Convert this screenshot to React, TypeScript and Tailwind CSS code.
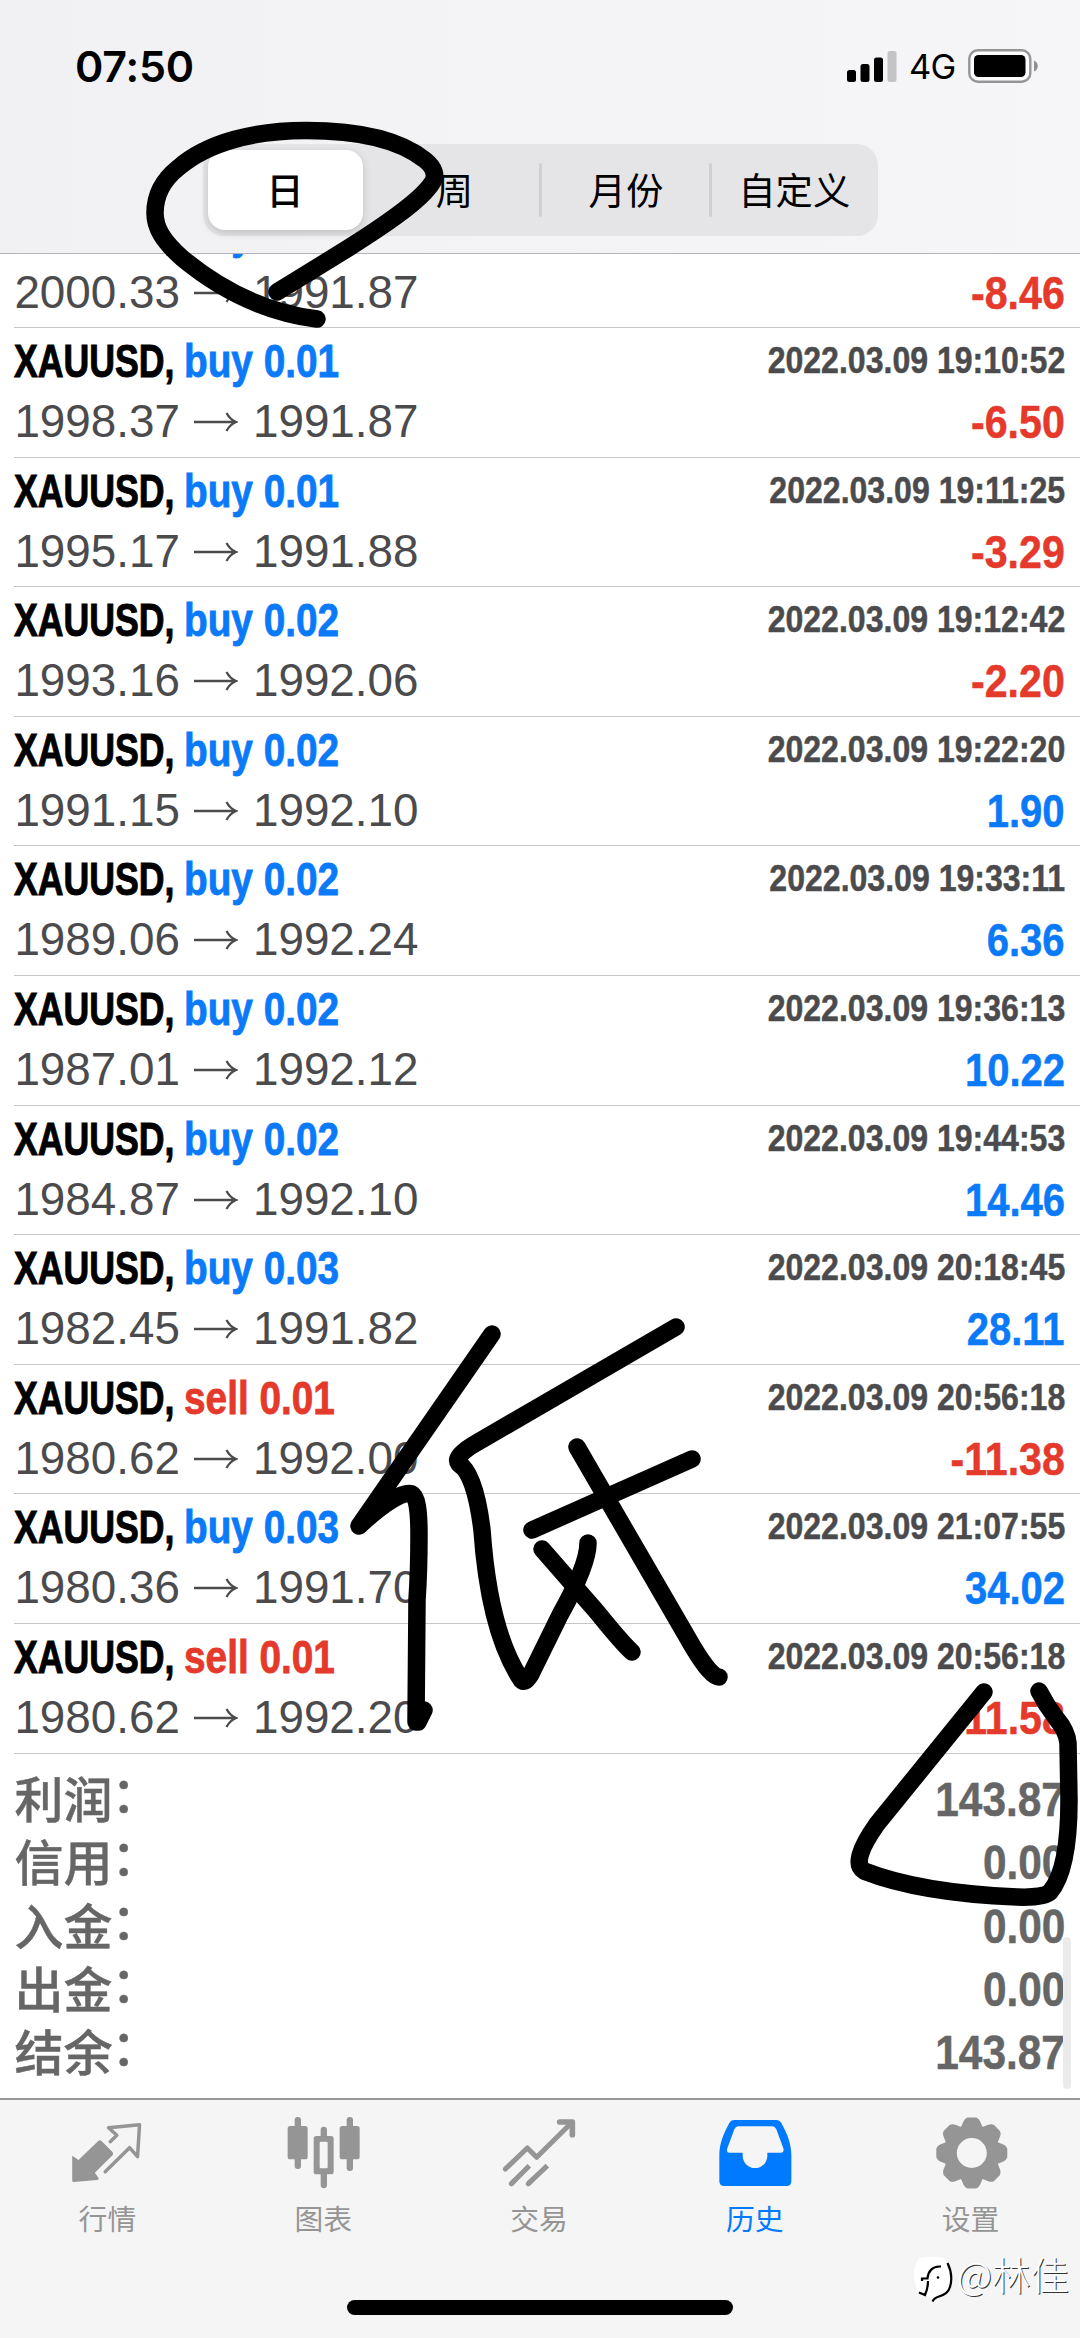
import type { ReactNode } from "react";

type Deal = {
  side: "buy" | "sell";
  lots: string;
  open: string;
  close: string;
  time: string;
  profit: string;
};

const deals: Deal[] = [
  { side: "buy", lots: "0.01", open: "2000.33", close: "1991.87", time: "", profit: "-8.46" },
  { side: "buy", lots: "0.01", open: "1998.37", close: "1991.87", time: "2022.03.09 19:10:52", profit: "-6.50" },
  { side: "buy", lots: "0.01", open: "1995.17", close: "1991.88", time: "2022.03.09 19:11:25", profit: "-3.29" },
  { side: "buy", lots: "0.02", open: "1993.16", close: "1992.06", time: "2022.03.09 19:12:42", profit: "-2.20" },
  { side: "buy", lots: "0.02", open: "1991.15", close: "1992.10", time: "2022.03.09 19:22:20", profit: "1.90" },
  { side: "buy", lots: "0.02", open: "1989.06", close: "1992.24", time: "2022.03.09 19:33:11", profit: "6.36" },
  { side: "buy", lots: "0.02", open: "1987.01", close: "1992.12", time: "2022.03.09 19:36:13", profit: "10.22" },
  { side: "buy", lots: "0.02", open: "1984.87", close: "1992.10", time: "2022.03.09 19:44:53", profit: "14.46" },
  { side: "buy", lots: "0.03", open: "1982.45", close: "1991.82", time: "2022.03.09 20:18:45", profit: "28.11" },
  { side: "sell", lots: "0.01", open: "1980.62", close: "1992.00", time: "2022.03.09 20:56:18", profit: "-11.38" },
  { side: "buy", lots: "0.03", open: "1980.36", close: "1991.70", time: "2022.03.09 21:07:55", profit: "34.02" },
  { side: "sell", lots: "0.01", open: "1980.62", close: "1992.20", time: "2022.03.09 20:56:18", profit: "-11.58" },
];

const totals = [
  ["利润", "143.87"],
  ["信用", "0.00"],
  ["入金", "0.00"],
  ["出金", "0.00"],
  ["结余", "143.87"],
];

function StatusBar() {
  return (
    <div className="flex h-[132px] items-center justify-between pr-[41px] pl-[75px]">
      <div className="pt-px font-['Inter',sans-serif] text-[43px] leading-none font-semibold tracking-[-0.2px]">07:50</div>
      <div className="flex items-center">
        <svg className="h-8 w-[50px]" viewBox="0 0 50 32">
          <rect x="0" y="20" width="9" height="12" rx="2.5" />
          <rect x="13.5" y="14" width="9" height="18" rx="2.5" />
          <rect x="27" y="7.5" width="9" height="24.5" rx="2.5" />
          <rect x="40.5" y="1" width="9" height="31" rx="2.5" fill="#c4c4c6" />
        </svg>
        <span className="mt-0.5 ml-3 w-[47px] font-['Inter',sans-serif] text-[34.5px] leading-none tracking-tight">4G</span>
        <svg className="ml-3 h-[34px] w-[71px]" viewBox="0 0 71 34">
          <rect x="1.3" y="1.3" width="61" height="31.4" rx="8.5" fill="#fff" fillOpacity=".7" stroke="#959597" strokeWidth="2.4" />
          <rect x="6" y="6" width="51.5" height="22" rx="4.5" />
          <path d="M66 11.5c5 1.8 5 9.2 0 11z" fill="#8f8f91" />
        </svg>
      </div>
    </div>
  );
}

function PeriodPicker() {
  return (
    <div className="mt-3 ml-[203px] flex h-[92px] w-[675px] items-center rounded-[21px] bg-[#e5e5e7] pl-[4.5px] font-['Noto_Sans_CJK_SC',sans-serif] text-[37.4px] leading-none">
      <div className="flex h-20 w-[155px] items-center justify-center rounded-[17px] bg-white font-medium shadow-[0_3px_8px_rgba(0,0,0,0.16)]">
        日
      </div>
      <div className="flex w-[176px] justify-center pl-2">周</div>
      <div className="h-[54px] w-[3px] rounded bg-[#d0d0d3]" />
      <div className="flex w-[167px] justify-center pl-0.5">月份</div>
      <div className="h-[54px] w-[3px] rounded bg-[#d0d0d3]" />
      <div className="flex flex-1 justify-center pr-px">自定义</div>
    </div>
  );
}

function Arrow() {
  return (
    <svg className="mr-[15px] ml-[14px] h-5 w-11 shrink-0" viewBox="0 0 44 20" fill="none" stroke="#4b4b4d" strokeWidth="2.3">
      <path d="M0 10h42M32.5 1q3.500 6.500 9.500 9q-6 2.500-9.500 9" />
    </svg>
  );
}

function DealRow({ deal }: { deal: Deal }) {
  const loss = deal.profit.startsWith("-");
  const sideColor = deal.side === "buy" ? "text-[#0a7af8]" : "text-[#e4392b]";
  const profitStyle = loss ? "scale-x-[0.895] text-[#e4392b]" : "scale-x-[0.87] text-[#0a7af8]";
  return (
    <div className="ml-[14.4px] h-[129.6px] border-b border-[#c6c6c9] pt-[3px] pr-[15px]">
      <div className="flex h-[60px] justify-between">
        <div className="flex text-[46px] leading-[60px] font-bold whitespace-nowrap">
          <span className="w-[169.5px] origin-left scale-x-[0.775] [-webkit-text-stroke:1px_#000]">XAUUSD,</span>
          <span className={`origin-left scale-x-[0.843] [-webkit-text-stroke:0.8px_currentColor] ${sideColor}`}>
            {deal.side} {deal.lots}
          </span>
        </div>
        <div className="origin-right scale-x-[0.857] text-[37.4px] leading-[59px] font-bold text-[#4b4b4d] [-webkit-text-stroke:0.5px_#4b4b4d]">
          {deal.time}
        </div>
      </div>
      <div className="flex h-[61px] justify-between pt-px text-[46px] leading-[60px]">
        <div className="flex items-center text-[45.8px] text-[#4b4b4d]">
          <span>{deal.open}</span>
          <Arrow />
          <span>{deal.close}</span>
        </div>
        <div className={`origin-right font-bold [-webkit-text-stroke:0.5px_currentColor] ${profitStyle}`}>{deal.profit}</div>
      </div>
    </div>
  );
}

function Totals() {
  return (
    <div className="flex flex-col pt-[13.5px] pr-[15px] pl-[14.4px] text-[49px] text-[#666]">
      {totals.map(([label, value]) => (
        <div key={label} className="flex h-[63.4px] items-center justify-between">
          <div className="-mt-[5px] flex font-['Noto_Sans_CJK_SC',sans-serif] leading-[61px] font-medium [-webkit-text-stroke:0.4px_#666]">
            <span>{label}</span>
            <span className="-mt-[3px] -ml-px font-['Noto_Sans_CJK_TC',sans-serif] [font-feature-settings:'halt']">：</span>
          </div>
          <div className="mt-px origin-right scale-x-[0.865] leading-[63px] font-bold [-webkit-text-stroke:0.5px_#666]">{value}</div>
        </div>
      ))}
    </div>
  );
}

function Tab({ label, viewBox, active, children }: { label: string; viewBox: string; active?: boolean; children: ReactNode }) {
  return (
    <div className={`flex flex-1 flex-col items-center ${active ? "text-[#007aff]" : "text-[#959595]"}`}>
      <svg className="size-[72px] overflow-visible" viewBox={viewBox} fill="currentColor">
        {children}
      </svg>
      <span className="mt-[9px] mr-px font-['Noto_Sans_CJK_SC',sans-serif] text-[28.8px] leading-[42px]">{label}</span>
    </div>
  );
}

const teeth = [0, 45, 90, 135, 180, 225, 270, 315];

function TabBar() {
  return (
    <div className="relative h-[240px] shrink-0 border-t-2 border-[#98989a] bg-[#f5f5f5]">
      <div className="flex pt-4 pr-px">
        <Tab label="行情" viewBox="35.4 33 216 216">
          <path d="M36 152l19 13 59-57q5-4 10 0l33 33q4 5 0 10l-53 52 11 16q2 5-4 6l-71 6q-5 0-4-5z" />
          <path d="M150 110l20-19-25-23 93-9-6 96-24-27-73 72" fill="none" stroke="currentColor" strokeWidth="10.500" strokeLinecap="round" strokeLinejoin="round" />
        </Tab>
        <Tab label="图表" viewBox="682 33 216 216">
          <rect x="681" y="63" width="60" height="100" rx="8" />
          <rect x="702" y="36" width="19" height="156" rx="9" />
          <path fillRule="evenodd" d="M767 93h44q8 0 8 8v99q0 8-8 8h-44q-8 0-8-8v-99q0-8 8-8zM781 110q-4 0-4 4v72q0 4 4 4h16q4 0 4-4v-72q0-4-4-4z" />
          <path d="M780 95V75a9.500 9.500 0 0 1 19 0v20zM780 206v34a9.500 9.500 0 0 0 19 0v-34z" />
          <rect x="837" y="63" width="60" height="100" rx="8" />
          <rect x="858" y="36" width="19" height="162" rx="9" />
        </Tab>
        <Tab label="交易" viewBox="39 33 216 216">
          <g fill="none" stroke="currentColor" strokeWidth="15" strokeLinecap="round" strokeLinejoin="round">
            <path d="M46 192l66-63 28 28L244 54" />
            <path d="M209 51h38v38" strokeWidth="17" />
            <path d="M64 236l12-12M115 236l12-12" />
            <path d="M64 236l54-54M115 236l57-54" strokeLinecap="butt" />
          </g>
        </Tab>
        <Tab label="历史" viewBox="686 33 216 216" active>
          <path
            fillRule="evenodd"
            d="M732 45h127q9 0 14 9c20 36 30 66 30 96v78q0 15-15 15H702q-15 0-15-15v-78c0-30 10-60 30-96q5-9 15-9zM744 64q-8 0-12 9l-21 57q-4 13 6 13h40v9a37 37 0 0 0 74 0v-9h41q10 0 7-13l-21-57q-4-9-12-9z"
          />
        </Tab>
        <Tab label="设置" viewBox="102.6 33 216 216">
          <circle cx="213" cy="144" r="65" fill="none" stroke="currentColor" strokeWidth="40" />
          {teeth.map((angle) => (
            <path
              key={angle}
              d="M201 42h24q6 2 9 9l7 17-8 16h-40l-8-16 7-17q3-7 9-9z"
              stroke="currentColor"
              strokeWidth="9"
              strokeLinejoin="round"
              transform={`rotate(${angle} 213 144)`}
            />
          ))}
        </Tab>
      </div>
      <div className="absolute bottom-[23px] left-[347px] h-[15px] w-[386px] rounded-full bg-black" />
    </div>
  );
}

function Signature() {
  return (
    <div className="absolute top-[2256px] left-[913px] flex items-start">
      <svg className="h-[46px] w-[42px]" viewBox="0 0 42 46" fill="none">
        <path d="M12 1h14q12 1 12 18 0 15-12 20l-8 3-3-2Q1 38 1 18 1 2 12 1z" fill="#fff" />
        <path d="M34.500 7q6 12 2.500 24-2 7-11 9.500-5 1.500-6.500 5" stroke="#000" strokeWidth="2.200" />
        <path d="M9 25v-2.500h5.500q1-11.500 12-12h1.500M15 25q0 7-3 14l-6-2.500" stroke="#000" strokeWidth="2.200" />
        <circle cx="25" cy="21.500" r="1.300" fill="#000" />
      </svg>
      <span className="-mt-[9px] ml-[2px] font-['Noto_Sans_CJK_SC',sans-serif] text-[38.5px] leading-[52px] font-light text-white [text-shadow:1px_1px_0.5px_#333]">
        @林佳
      </span>
    </div>
  );
}

function Ink() {
  return (
    <svg
      className="pointer-events-none absolute top-0 left-0 z-20 h-[2338px] w-[1080px]"
      viewBox="0 0 1080 2338"
      fill="none"
      stroke="#000"
      strokeWidth="17.500"
      strokeLinecap="round"
      strokeLinejoin="round"
    >
      <path d="M317 319C262 312 217 287 182 258C163 241 155 228 155 213C155 195 163 180 178 168C208 142 255 130.500 306 130.500C360 130.500 400 140 425 160C435 168 437 176 432 183C420 202 380 228 350 247L277 292" />
      <path d="M492 1334L359 1526Q398 1490 412 1494Q419 1497 419 1535Q419 1570 417 1600L416 1722L418 1722L424 1710" />
      <path d="M676 1327L478 1442Q453 1456 459 1464Q475 1473 482 1530Q489 1630 520 1678Q524 1686 531 1674L560 1615Q588 1565 588 1543" />
      <path d="M532 1530L692 1459M577 1447L693 1647Q711 1677 719 1677M542 1549L597 1612Q622 1643 632 1652" />
      <path d="M984 1692L877 1824Q850 1862 864 1871Q920 1893 1017 1897Q1044 1898 1050 1892Q1069 1870 1069 1800L1068 1743Q1067 1731 1056 1718Q1046 1705 1039 1691" />
    </svg>
  );
}

export default function App() {
  return (
    <div className="relative flex h-[2338px] w-[1080px] flex-col overflow-hidden bg-white font-['Liberation_Sans',Arial,sans-serif] text-black">
      <header className="relative z-10 h-[254px] shrink-0 border-b border-[#b4b4b8] bg-linear-to-r from-[#f1f1f3] to-[#f6f5f7]">
        <StatusBar />
        <PeriodPicker />
      </header>
      <main className="relative -mt-[55.5px] min-h-0 flex-1">
        {deals.map((deal, i) => (
          <DealRow key={i} deal={deal} />
        ))}
        <Totals />
        <div className="absolute right-[9px] bottom-[9px] h-[152px] w-2 rounded-full bg-[#ebebeb]" />
      </main>
      <TabBar />
      <Signature />
      <Ink />
    </div>
  );
}
